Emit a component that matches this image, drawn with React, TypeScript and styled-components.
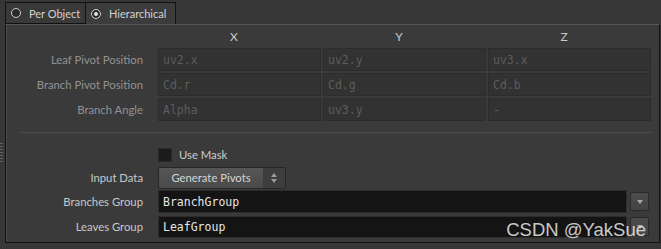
import React from 'react'
import styled, { createGlobalStyle } from 'styled-components'

const GlobalStyle = createGlobalStyle`
  html, body {
    margin: 0;
    padding: 0;
    background: #2f2f2f;
  }
`

const UI_FONT = `Lato, "Open Sans", sans-serif`
const MONO_FONT = `"DejaVu Sans Mono", "Liberation Mono", monospace`

const Window = styled.div`
  position: relative;
  width: 661px;
  height: 249px;
  display: flex;
  flex-direction: column;
  background: #373737;
  font-family: ${UI_FONT};
  font-size: 11.3px;
  overflow: hidden;
`

const TabBar = styled.div`
  height: 24px;
  display: flex;
  align-items: flex-end;
  padding-left: 5px;
  box-sizing: border-box;
`

const Tab = styled.div<{ $active?: boolean; $width: number }>`
  width: ${({ $width }) => $width}px;
  height: 22px;
  box-sizing: border-box;
  display: flex;
  align-items: center;
  gap: 8px;
  padding-left: 5px;
  border: 1px solid #121212;
  border-bottom: ${({ $active }) => ($active ? 'none' : '1px solid #121212')};
  border-left: ${({ $active }) => ($active ? 'none' : '1px solid #121212')};
  background: ${({ $active }) => ($active ? '#3c3c3c' : '#393939')};
  color: #d2d2d2;
  font-size: 11px;
`

const Radio = styled.span<{ $checked?: boolean }>`
  width: 10px;
  height: 10px;
  box-sizing: border-box;
  border-radius: 50%;
  border: 1.5px solid #cfcfcf;
  background: #2a2a2a;
  display: flex;
  align-items: center;
  justify-content: center;

  &::after {
    content: '';
    display: ${({ $checked }) => ($checked ? 'block' : 'none')};
    width: 4px;
    height: 4px;
    border-radius: 50%;
    background: #e6e6e6;
  }
`

const Body = styled.div`
  flex: 1;
  display: flex;
`

const Rail = styled.div`
  width: 5px;
  display: flex;
  flex-direction: column;
  padding-top: 119px;
  box-sizing: border-box;
`

const Grip = styled.div`
  width: 3px;
  height: 21px;
  background: repeating-linear-gradient(
    to bottom,
    #626262 0,
    #626262 1px,
    #373737 1px,
    #373737 3px
  );
`

const Frame = styled.div`
  flex: 1;
  margin: 0 1px 6px 0;
  background: #3a3a3a;
  border-top: 1px solid #565656;
  border-left: 1px solid #111;
  border-right: 1px solid #111;
  border-bottom: 1px solid #111;
  box-shadow: inset 1px 0 0 #4a4a4a;
  padding: 0 8px 0 0;
  display: flex;
  flex-direction: column;
`

const ParmRow = styled.div<{ $height: number }>`
  height: ${({ $height }) => $height}px;
  display: grid;
  grid-template-columns: 137px 1fr;
  column-gap: 15px;
  align-items: center;
`

const Label = styled.div<{ $disabled?: boolean }>`
  text-align: right;
  color: ${({ $disabled }) => ($disabled ? '#929292' : '#c8c8c8')};
  white-space: nowrap;
`

const Vector = styled.div`
  display: grid;
  grid-template-columns: repeat(3, 1fr);
  column-gap: 2px;
`

const Rows = styled.div`
  display: flex;
  flex-direction: column;
  gap: 2px;
`

const AxisLabel = styled.div`
  text-align: center;
  padding-right: 11px;
  color: #c9c9c9;
  font-size: 12px;
`

const VecField = styled.div`
  height: 23px;
  box-sizing: border-box;
  background: #323232;
  border: 1px solid #2c2c2c;
  padding-left: 4px;
  display: flex;
  align-items: center;
  font-family: ${MONO_FONT};
  font-size: 11.5px;
  color: #5d5d5d;
`

const Separator = styled.div`
  height: 1px;
  margin: 11px 0 10px 15px;
  background: #4f4f4f;
`

const CheckBox = styled.span`
  width: 14px;
  height: 14px;
  box-sizing: border-box;
  background: #1b1b1b;
  border: 1px solid #2a2a2a;
`

const CheckField = styled.label`
  display: flex;
  align-items: center;
  gap: 7px;
  color: #cdcdcd;
`

const MenuButton = styled.div`
  width: 128px;
  height: 22px;
  box-sizing: border-box;
  display: flex;
  border: 1px solid #262626;
  border-radius: 2px;
  overflow: hidden;
  background: linear-gradient(#565656, #4a4a4a);
  color: #d4d4d4;
`

const MenuText = styled.div`
  flex: 1;
  display: flex;
  align-items: center;
  justify-content: center;
`

const MenuArrows = styled.div`
  width: 22px;
  display: flex;
  flex-direction: column;
  align-items: center;
  justify-content: center;
  gap: 2px;
  background: #3d3d3d;
`

const Tri = styled.span<{ $up?: boolean; $w?: number; $h?: number; $color?: string }>`
  width: 0;
  height: 0;
  border-left: ${({ $w = 3 }) => $w}px solid transparent;
  border-right: ${({ $w = 3 }) => $w}px solid transparent;
  ${({ $up, $h = 4, $color = '#9a9a9a' }) =>
    $up
      ? `border-bottom: ${$h}px solid ${$color};`
      : `border-top: ${$h}px solid ${$color};`}
`

const GroupField = styled.div`
  display: flex;
  align-items: center;
  gap: 3px;
  padding-right: 2px;
`

const TextInput = styled.div<{ $height: number }>`
  flex: 1;
  height: ${({ $height }) => $height}px;
  box-sizing: border-box;
  background: #141414;
  border: 1px solid #2c2c2c;
  padding-left: 4px;
  display: flex;
  align-items: center;
  font-family: ${MONO_FONT};
  font-size: 11.5px;
  color: #e6e6e6;
`

const DropButton = styled.div`
  width: 19px;
  height: 19px;
  box-sizing: border-box;
  border: 1px solid #2a2a2a;
  border-radius: 2px;
  background: linear-gradient(#4c4c4c, #444);
  display: flex;
  align-items: center;
  justify-content: center;
`

const Watermark = styled.div`
  position: absolute;
  right: 15px;
  bottom: 8px;
  font-family: "Liberation Sans", Arial, sans-serif;
  font-size: 18.5px;
  color: rgba(235, 235, 235, 0.85);
  pointer-events: none;
`

const vectors = [
  { label: 'Leaf Pivot Position', values: ['uv2.x', 'uv2.y', 'uv3.x'] },
  { label: 'Branch Pivot Position', values: ['Cd.r', 'Cd.g', 'Cd.b'] },
  { label: 'Branch Angle', values: ['Alpha', 'uv3.y', '-'] },
]

const groups = [
  { label: 'Branches Group', value: 'BranchGroup', height: 23, rowHeight: 25 },
  { label: 'Leaves Group', value: 'LeafGroup', height: 22, rowHeight: 25 },
]

export default function App() {
  return (
    <Window>
      <GlobalStyle />
      <TabBar>
        <Tab $width={81}>
          <Radio />
          Per Object
        </Tab>
        <Tab $active $width={90}>
          <Radio $checked />
          Hierarchical
        </Tab>
      </TabBar>
      <Body>
        <Rail>
          <Grip />
        </Rail>
        <Frame>
          <ParmRow $height={23}>
            <span />
            <Vector>
              <AxisLabel>X</AxisLabel>
              <AxisLabel>Y</AxisLabel>
              <AxisLabel>Z</AxisLabel>
            </Vector>
          </ParmRow>
          <Rows>
            {vectors.map((v) => (
              <ParmRow key={v.label} $height={23}>
                <Label $disabled>{v.label}</Label>
                <Vector>
                  {v.values.map((val, i) => (
                    <VecField key={i}>{val}</VecField>
                  ))}
                </Vector>
              </ParmRow>
            ))}
          </Rows>
          <Separator />
          <ParmRow $height={23}>
            <span />
            <CheckField>
              <CheckBox />
              Use Mask
            </CheckField>
          </ParmRow>
          <ParmRow $height={23}>
            <Label>Input Data</Label>
            <MenuButton>
              <MenuText>Generate Pivots</MenuText>
              <MenuArrows>
                <Tri $up />
                <Tri />
              </MenuArrows>
            </MenuButton>
          </ParmRow>
          {groups.map((g) => (
            <ParmRow key={g.label} $height={g.rowHeight}>
              <Label>{g.label}</Label>
              <GroupField>
                <TextInput $height={g.height}>{g.value}</TextInput>
                <DropButton>
                  <Tri $w={3} $h={4} $color="#a8a8a8" />
                </DropButton>
              </GroupField>
            </ParmRow>
          ))}
        </Frame>
      </Body>
      <Watermark>CSDN @YakSue</Watermark>
    </Window>
  )
}
